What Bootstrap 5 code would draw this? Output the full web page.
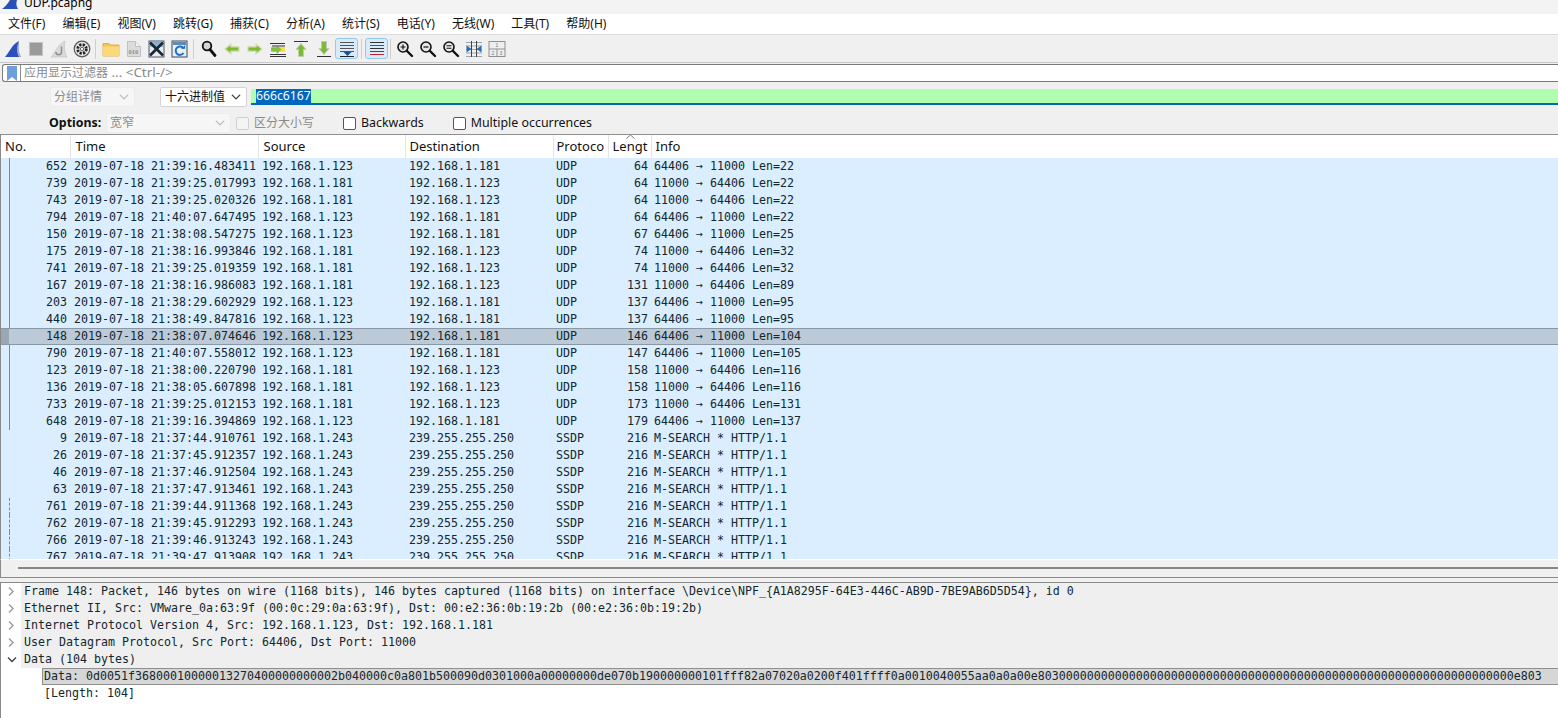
<!DOCTYPE html>
<html lang="zh">
<head>
<meta charset="utf-8">
<title>UDP.pcapng</title>
<link href="https://cdn.jsdelivr.net/npm/bootstrap@5.3.0/dist/css/bootstrap.min.css" rel="stylesheet">
<style>
html,body{height:718px;overflow:hidden}
body{background:#f0f0f0;color:#000;font-family:"Noto Sans","Noto Sans CJK SC",sans-serif;font-size:12px;line-height:1}
.ws-title{height:14px;background:#f3f3f3;overflow:hidden;padding-left:2px;gap:6px}
.ws-title svg{flex:none}
.ws-title span{margin-top:-5px;font-size:12px;line-height:15px}
.ws-menu{height:20px;background:#fff;padding-left:8px;gap:17.1px;font-size:12px;color:#111}
.ws-menu span{white-space:nowrap}
.ws-tools{height:28px;background:#f0f0f0;border-top:1px solid #dcdcdc;padding-left:1px}
.tbtn{width:23px;height:21px;padding:0;border:1px solid transparent;border-radius:3px;flex:none;line-height:0;background:transparent}
.tbtn.on{background:#d9ebfa;border-color:#92c8f2}
.tbtn svg{display:block;margin:auto}
.tsep{width:1px;height:20px;background:#cfcfcf;margin:0 3px 0 2px;flex:none}
.tsep.s2{margin:0 3px 0 3px}
.tsep.s3{margin:0 2px 0 2px}
.ws-filter{height:22px;background:#f0f0f0;padding:1px 0 2px 2px;border-top:1px solid #c8c8c8}
.ws-fbox{height:18px;width:100%;background:#fff;border:1px solid #7a7a7a;border-right:0;border-radius:3px 0 0 3px;overflow:hidden}
.ws-fmark{width:18px;height:100%;border-right:1px solid #8e8e8e;flex:none}
.ws-fph{padding-left:3px;color:#8a8a8a;font-size:12px;white-space:nowrap}
.ws-fph span{font-size:13.4px}
.ws-find{height:26px;padding-left:50px}
.ws-sel.form-select{font-size:12px;line-height:16px;height:20px;min-height:0;padding:0 0 0 3px;border-radius:2px;border:1px solid #d4d4d4;background-color:#fff;background-position:right 5px center;background-size:10px 10px;color:#111;font-family:inherit}
.ws-sel.form-select:disabled{background-color:#f6f6f6;border-color:#ececec;color:#8c8c8c;background-image:url("data:image/svg+xml,%3csvg xmlns='http://www.w3.org/2000/svg' viewBox='0 0 16 16'%3e%3cpath fill='none' stroke='%23bbbbbb' stroke-linecap='round' stroke-linejoin='round' stroke-width='2' d='m2 5 6 6 6-6'/%3e%3c/svg%3e")}
.ws-s1{width:85px;margin-right:25px}
.ws-s2{width:87px;margin-right:4px}
.ws-s2.form-select{padding-left:4px}
.ws-s3{width:125px}
.ws-hex{flex:1;height:16px;background:#afffaf;border-bottom:2px solid #0067c0;padding-left:5px;line-height:14px;font-size:12.2px;overflow:hidden}
.ws-hex span{display:inline-block;background:#0067c0;color:#fff;height:14px;line-height:14px}
.ws-opts{height:24px;padding-left:49px;padding-top:2px;font-size:12.4px;color:#111}
.ws-opts b{font-weight:700;width:57px;flex:none}
.ws-chk{display:flex;align-items:center;gap:5px;white-space:nowrap}
.ws-chk .form-check-input{width:13px;height:13px;margin:0;border:1px solid #555;border-radius:2px;background-color:#fff;flex:none}
.ws-chk .form-check-input:disabled{opacity:1;border-color:#d0d0d0;background-color:#f4f4f4}
.ws-chk.off{color:#8a8a8a;font-size:12px;margin-left:5px}
.ws-chk.on29{margin-left:29px}
.ws-list{height:425px;border-top:1px solid #8f8f8f;border-left:1px solid #8a8a8a;overflow:hidden}
.ws-tbl{table-layout:fixed;width:1557px;border-collapse:collapse;font-family:"DejaVu Sans Mono",monospace;font-size:11.63px;color:#12272e}
.ws-tbl th{height:23px;background:#fff;font-family:"Noto Sans",sans-serif;font-weight:400;font-size:13px;color:#111;padding:0 0 0 5px;border-right:1px solid #e4e4e4;white-space:nowrap;overflow:hidden;position:relative}
.ws-tbl th.hn{padding-left:4px}
.ws-tbl th.hd{padding-left:4px}
.ws-tbl th:last-child{border-right:0;padding-left:4px}
.ws-tbl th.hp{padding-left:3px}
.ws-tbl th.hl{padding-left:4px}
.ws-tbl td{height:17px;padding:0 0 0 4px;background:#daeeff;white-space:nowrap;overflow:hidden;line-height:17px;border:0}
.ws-tbl td.rt{text-align:right;padding:0 3px 0 0}
.ws-tbl td.lf{padding-left:3px}
.ws-tbl tr.sel td{background:#bccad8;box-shadow:inset 0 1px 0 #8a98a6,inset 0 -1px 0 #8a98a6}
.ws-tbl td.fno{position:relative}
.ws-tbl td.fno::before{content:"";position:absolute;left:8px;top:0;bottom:0}
.ws-tbl tr.ln td.fno::before{border-left:1px solid #7d8a94}
.ws-tbl tr.dsh td.fno::before{border-left:1px dashed #7d8a94}
.ws-tbl tr.sel td.fno::after{content:"";position:absolute;left:0;top:1px;bottom:1px;width:8px;background:#9aa8b5}
.ws-sort{position:absolute;left:17px;top:-1px;display:block}
.ws-hbar{height:18px;border-left:1px solid #8a8a8a;border-top:1px solid #fff;background:#f0f0f0;padding:7px 0 0 17px}
.ws-hbar i{display:block;height:2px;background:#868686}
.ws-split{height:6px;border-top:1px solid #8a8a8a;border-bottom:1px solid #8a8a8a;background:#f0f0f0}
.ws-tree{background:#fff;height:136px;border-left:1px solid #8a8a8a;font-family:"DejaVu Sans Mono",monospace;font-size:11.63px;color:#12272e;overflow:hidden}
.ws-node{height:17px;line-height:17px;white-space:nowrap;display:flex}
.ws-tw{width:20px;flex:none;background:#fff}
.ws-tw svg{display:block;margin:4px 0 0 6px}
.ws-tw svg.open{margin-left:2px;margin-top:5px}
.ws-lab{flex:1;background:#efefef;padding-left:3px;overflow:hidden}
.ws-kid{padding-left:41px}
.ws-kid div{background:#d6d6d6;border:1px solid #8f8f8f;border-right:0;height:17px;line-height:15px;padding-left:1px;overflow:hidden;white-space:nowrap}
.ws-plain{padding-left:43px;height:17px;line-height:17px;white-space:nowrap}
</style>
</head>
<body>
<div class="ws-title d-flex align-items-start">
  <svg width="16" height="9" viewBox="0 0 16 9"><path d="M0 9C3 7 6 3 8 0h7c-1 3-1 6 1 9z" fill="#2a50b8"/></svg>
  <span>UDP.pcapng</span>
</div>
<div class="ws-menu d-flex align-items-center">
  <span>文件(F)</span><span>编辑(E)</span><span>视图(V)</span><span>跳转(G)</span><span>捕获(C)</span><span>分析(A)</span><span>统计(S)</span><span>电话(Y)</span><span>无线(W)</span><span>工具(T)</span><span>帮助(H)</span>
</div>
<div class="ws-tools d-flex align-items-center">
  <button class="btn tbtn" title="开始"><svg width="18" height="18" viewBox="0 0 18 18"><path d="M1 17C5 13 8 4 15 1c-1 5-1 11 2 16z" fill="#2b50bb"/><path d="M15 1c-1 5-1 11 2 16h-2c-3-5-2-12 0-16z" fill="#a9b6cf"/></svg></button>
  <button class="btn tbtn" title="停止"><svg width="16" height="16" viewBox="0 0 16 16"><rect x="1.500" y="1.500" width="13" height="13" fill="#9a9a9a" stroke="#c4c4c4"/></svg></button>
  <button class="btn tbtn" title="重新开始"><svg width="18" height="18" viewBox="0 0 18 18"><path d="M1 17C5 13 8 4 15 1c-1 5-1 11 2 16z" fill="#dadada" stroke="#bdbdbd" stroke-width=".6"/><path d="M11.500 6.500v5.500a2.800 2.800 0 0 1-5.600 0" fill="none" stroke="#8f8f8f" stroke-width="1.500"/></svg></button>
  <button class="btn tbtn" title="选项"><svg width="18" height="18" viewBox="0 0 18 18"><circle cx="9" cy="9" r="7.800" fill="#e9e9e9" stroke="#555" stroke-width="1.200"/><circle cx="9" cy="9" r="4.300" fill="none" stroke="#222" stroke-width="2.800" stroke-dasharray="2.200 1.200"/><circle cx="9" cy="9" r="1.700" fill="#f2f2f2" stroke="#333" stroke-width=".7"/></svg></button>
  <div class="tsep"></div>
  <button class="btn tbtn" title="打开"><svg width="18" height="16" viewBox="0 0 18 16"><path d="M1 2.500h6l1.500 1.500H17v11H1z" fill="#f5c451" stroke="#dca433" stroke-width=".8"/><path d="M1 5.500h16V15H1z" fill="#fad97b"/></svg></button>
  <button class="btn tbtn" title="保存"><svg width="16" height="18" viewBox="0 0 16 18"><path d="M1.500 1.500h8l5 5v10h-13z" fill="#dcdcdc" stroke="#c0c0c0"/><path d="M9.500 1.500v5h5" fill="#f2f2f2" stroke="#c0c0c0"/><text x="2.600" y="14" font-family="Liberation Mono,monospace" font-size="5.400" font-weight="700" fill="#8a8a8a">010</text></svg></button>
  <button class="btn tbtn" title="关闭"><svg width="17" height="18" viewBox="0 0 17 18"><rect x="1" y="1" width="15" height="16" fill="#e6edf2" stroke="#4a5968"/><rect x="2" y="2" width="13" height="5" fill="#8fb0cd"/><path d="M2 2.500l13 13M15 2.500L2 15.500" stroke="#1c2630" stroke-width="2.600"/></svg></button>
  <button class="btn tbtn" title="重新载入"><svg width="17" height="18" viewBox="0 0 17 18"><rect x="1" y="1" width="15" height="16" fill="#e9eff5" stroke="#39495a"/><rect x="2" y="2" width="13" height="3" fill="#5f88b3"/><path d="M12.500 8.500a4.200 4.200 0 1 0 0 4.400" fill="none" stroke="#1e6fc9" stroke-width="2"/><path d="M10 8.800h4.200V5z" fill="#1e6fc9"/></svg></button>
  <div class="tsep"></div>
  <button class="btn tbtn" title="查找"><svg width="18" height="18" viewBox="0 0 18 18"><circle cx="7" cy="6" r="4.300" fill="#d5d5d5" stroke="#111" stroke-width="1.800"/><path d="M10 9.500l5 6" stroke="#111" stroke-width="2.800" stroke-linecap="round"/></svg></button>
  <button class="btn tbtn" title="前一个"><svg width="16" height="12" viewBox="0 0 16 12"><path d="M1 6l6-5v2.800h8v4.400H7V11z" fill="#7dbb33" stroke="#d3dfb0" stroke-width="1.200"/></svg></button>
  <button class="btn tbtn" title="后一个"><svg width="16" height="12" viewBox="0 0 16 12"><path d="M15 6L9 1v2.800H1v4.400h8V11z" fill="#7dbb33" stroke="#d3dfb0" stroke-width="1.200"/></svg></button>
  <button class="btn tbtn" title="转至"><svg width="18" height="18" viewBox="0 0 18 18"><path d="M1 3.500h15M3 6h13M1 14.500h16M1 16.500h16" stroke="#333" stroke-width="1"/><rect x="11" y="7" width="5" height="5" fill="#f4e04a"/><path d="M12 9.500L8 5.500v2.200H2.500v3.600H8v2.200z" fill="#82c341" stroke="#6b8f3e" stroke-width=".5"/></svg></button>
  <button class="btn tbtn" title="首个"><svg width="16" height="18" viewBox="0 0 16 18"><path d="M1 1.500h14" stroke="#333" stroke-width="1"/><path d="M8 3.500l5 6h-2.500v7h-5v-7H3z" fill="#7dbb33" stroke="#c3c9b6"/></svg></button>
  <button class="btn tbtn" title="最后"><svg width="16" height="18" viewBox="0 0 16 18"><path d="M1 16.500h14" stroke="#333" stroke-width="1"/><path d="M8 14.500l5-6h-2.500v-7h-5v7H3z" fill="#7dbb33" stroke="#c3c9b6"/></svg></button>
  <button class="btn tbtn on" title="自动滚屏"><svg width="18" height="18" viewBox="0 0 18 18"><path d="M2 2.500h14M2 5.500h14M2 8.500h14M2 11.500h14" stroke="#555" stroke-width="1"/><path d="M2 16.500h14" stroke="#222" stroke-width="1"/><path d="M5.500 12h8l-4 4z" fill="#1d4f91"/></svg></button>
  <div class="tsep s2"></div>
  <button class="btn tbtn on" title="着色"><svg width="18" height="16" viewBox="0 0 18 16"><path d="M2 1.500h14" stroke="#333"/><path d="M2 4.500h14" stroke="#c22"/><path d="M2 7.500h14" stroke="#333"/><path d="M2 10.500h14" stroke="#1d4fb0"/><path d="M2 13.500h14" stroke="#c22"/></svg></button>
  <div class="tsep s3"></div>
  <button class="btn tbtn" title="放大"><svg width="18" height="18" viewBox="0 0 18 18"><circle cx="7" cy="7" r="5" fill="#e8e8e8" stroke="#111" stroke-width="1.600"/><path d="M4.500 7h5M7 4.500v5" stroke="#111" stroke-width="1.200"/><path d="M11 11l5 5" stroke="#111" stroke-width="2.400" stroke-linecap="round"/></svg></button>
  <button class="btn tbtn" title="缩小"><svg width="18" height="18" viewBox="0 0 18 18"><circle cx="7" cy="7" r="5" fill="#e8e8e8" stroke="#111" stroke-width="1.600"/><path d="M4.500 7h5" stroke="#111" stroke-width="1.200"/><path d="M11 11l5 5" stroke="#111" stroke-width="2.400" stroke-linecap="round"/></svg></button>
  <button class="btn tbtn" title="普通大小"><svg width="18" height="18" viewBox="0 0 18 18"><circle cx="7" cy="7" r="5" fill="#e8e8e8" stroke="#111" stroke-width="1.600"/><path d="M4.500 5.700h5M4.500 8.300h5" stroke="#111" stroke-width="1.100"/><path d="M11 11l5 5" stroke="#111" stroke-width="2.400" stroke-linecap="round"/></svg></button>
  <button class="btn tbtn" title="调整列"><svg width="18" height="18" viewBox="0 0 18 18"><path d="M1 2.500h16M1 6h16M1 9.500h16M1 13h16M1 16.500h16" stroke="#9aa5ae" stroke-width="1"/><path d="M6.500 1v16M11.500 1v16" stroke="#444" stroke-width="1"/><path d="M1.500 5.500l5 3.500-5 3.500zM16.500 5.500l-5 3.500 5 3.500z" fill="#2b6cb8"/></svg></button>
  <button class="btn tbtn" title="布局"><svg width="18" height="18" viewBox="0 0 18 18"><rect x="1" y="1.500" width="16" height="15" fill="#eee" stroke="#8f8f8f"/><path d="M1 9h16M9 9v7.500" stroke="#8f8f8f"/><text x="7.400" y="7" font-family="Liberation Sans,sans-serif" font-size="5" fill="#777">1</text><text x="3.400" y="15" font-family="Liberation Sans,sans-serif" font-size="5" fill="#777">2</text><text x="11.500" y="15" font-family="Liberation Sans,sans-serif" font-size="5" fill="#777">3</text></svg></button>
</div>
<div class="ws-filter">
  <div class="ws-fbox d-flex align-items-center">
    <div class="ws-fmark d-flex align-items-center justify-content-center"><svg width="10" height="15" viewBox="0 0 10 15"><path d="M0 0h10v15L5 11 0 15z" fill="#6f9fd8"/></svg></div>
    <span class="ws-fph">应用显示过滤器<span> ... &lt;Ctrl-/&gt;</span></span>
  </div>
</div>
<div class="ws-find d-flex align-items-center">
  <select class="form-select ws-sel ws-s1" disabled><option>分组详情</option></select>
  <select class="form-select ws-sel ws-s2"><option>十六进制值</option></select>
  <div class="ws-hex"><span>666c6167</span></div>
</div>
<div class="ws-opts d-flex align-items-center">
  <b>Options:</b>
  <select class="form-select ws-sel ws-s3" disabled><option>宽窄</option></select>
  <label class="ws-chk off"><input class="form-check-input" type="checkbox" disabled>区分大小写</label>
  <label class="ws-chk on29"><input class="form-check-input" type="checkbox">Backwards</label>
  <label class="ws-chk on29"><input class="form-check-input" type="checkbox">Multiple occurrences</label>
</div>
<div class="ws-list">
<table class="ws-tbl">
<colgroup><col style="width:69px"><col style="width:188px"><col style="width:147px"><col style="width:148px"><col style="width:55px"><col style="width:43px"><col></colgroup>
<thead><tr><th class="hn">No.</th><th>Time</th><th>Source</th><th class="hd">Destination</th><th class="hp">Protoco</th><th class="hl"><svg class="ws-sort" width="9" height="5" viewBox="0 0 9 5"><path d="M.5 4.500l4-3.500 4 3.500" fill="none" stroke="#777"/></svg>Lengt</th><th>Info</th></tr></thead>
<tbody>
<tr class="ln"><td class="rt fno">652</td><td>2019-07-18 21:39:16.483411</td><td>192.168.1.123</td><td>192.168.1.181</td><td class="lf">UDP</td><td class="rt">64</td><td class="lf">64406 → 11000 Len=22</td></tr>
<tr class="ln"><td class="rt fno">739</td><td>2019-07-18 21:39:25.017993</td><td>192.168.1.181</td><td>192.168.1.123</td><td class="lf">UDP</td><td class="rt">64</td><td class="lf">11000 → 64406 Len=22</td></tr>
<tr class="ln"><td class="rt fno">743</td><td>2019-07-18 21:39:25.020326</td><td>192.168.1.181</td><td>192.168.1.123</td><td class="lf">UDP</td><td class="rt">64</td><td class="lf">11000 → 64406 Len=22</td></tr>
<tr class="ln"><td class="rt fno">794</td><td>2019-07-18 21:40:07.647495</td><td>192.168.1.123</td><td>192.168.1.181</td><td class="lf">UDP</td><td class="rt">64</td><td class="lf">64406 → 11000 Len=22</td></tr>
<tr class="ln"><td class="rt fno">150</td><td>2019-07-18 21:38:08.547275</td><td>192.168.1.123</td><td>192.168.1.181</td><td class="lf">UDP</td><td class="rt">67</td><td class="lf">64406 → 11000 Len=25</td></tr>
<tr class="ln"><td class="rt fno">175</td><td>2019-07-18 21:38:16.993846</td><td>192.168.1.181</td><td>192.168.1.123</td><td class="lf">UDP</td><td class="rt">74</td><td class="lf">11000 → 64406 Len=32</td></tr>
<tr class="ln"><td class="rt fno">741</td><td>2019-07-18 21:39:25.019359</td><td>192.168.1.181</td><td>192.168.1.123</td><td class="lf">UDP</td><td class="rt">74</td><td class="lf">11000 → 64406 Len=32</td></tr>
<tr class="ln"><td class="rt fno">167</td><td>2019-07-18 21:38:16.986083</td><td>192.168.1.181</td><td>192.168.1.123</td><td class="lf">UDP</td><td class="rt">131</td><td class="lf">11000 → 64406 Len=89</td></tr>
<tr class="ln"><td class="rt fno">203</td><td>2019-07-18 21:38:29.602929</td><td>192.168.1.123</td><td>192.168.1.181</td><td class="lf">UDP</td><td class="rt">137</td><td class="lf">64406 → 11000 Len=95</td></tr>
<tr class="ln"><td class="rt fno">440</td><td>2019-07-18 21:38:49.847816</td><td>192.168.1.123</td><td>192.168.1.181</td><td class="lf">UDP</td><td class="rt">137</td><td class="lf">64406 → 11000 Len=95</td></tr>
<tr class="sel"><td class="rt fno">148</td><td>2019-07-18 21:38:07.074646</td><td>192.168.1.123</td><td>192.168.1.181</td><td class="lf">UDP</td><td class="rt">146</td><td class="lf">64406 → 11000 Len=104</td></tr>
<tr class="ln"><td class="rt fno">790</td><td>2019-07-18 21:40:07.558012</td><td>192.168.1.123</td><td>192.168.1.181</td><td class="lf">UDP</td><td class="rt">147</td><td class="lf">64406 → 11000 Len=105</td></tr>
<tr class="ln"><td class="rt fno">123</td><td>2019-07-18 21:38:00.220790</td><td>192.168.1.181</td><td>192.168.1.123</td><td class="lf">UDP</td><td class="rt">158</td><td class="lf">11000 → 64406 Len=116</td></tr>
<tr class="ln"><td class="rt fno">136</td><td>2019-07-18 21:38:05.607898</td><td>192.168.1.181</td><td>192.168.1.123</td><td class="lf">UDP</td><td class="rt">158</td><td class="lf">11000 → 64406 Len=116</td></tr>
<tr class="ln"><td class="rt fno">733</td><td>2019-07-18 21:39:25.012153</td><td>192.168.1.181</td><td>192.168.1.123</td><td class="lf">UDP</td><td class="rt">173</td><td class="lf">11000 → 64406 Len=131</td></tr>
<tr class="ln"><td class="rt fno">648</td><td>2019-07-18 21:39:16.394869</td><td>192.168.1.123</td><td>192.168.1.181</td><td class="lf">UDP</td><td class="rt">179</td><td class="lf">64406 → 11000 Len=137</td></tr>
<tr><td class="rt fno">9</td><td>2019-07-18 21:37:44.910761</td><td>192.168.1.243</td><td>239.255.255.250</td><td class="lf">SSDP</td><td class="rt">216</td><td class="lf">M-SEARCH * HTTP/1.1</td></tr>
<tr><td class="rt fno">26</td><td>2019-07-18 21:37:45.912357</td><td>192.168.1.243</td><td>239.255.255.250</td><td class="lf">SSDP</td><td class="rt">216</td><td class="lf">M-SEARCH * HTTP/1.1</td></tr>
<tr><td class="rt fno">46</td><td>2019-07-18 21:37:46.912504</td><td>192.168.1.243</td><td>239.255.255.250</td><td class="lf">SSDP</td><td class="rt">216</td><td class="lf">M-SEARCH * HTTP/1.1</td></tr>
<tr><td class="rt fno">63</td><td>2019-07-18 21:37:47.913461</td><td>192.168.1.243</td><td>239.255.255.250</td><td class="lf">SSDP</td><td class="rt">216</td><td class="lf">M-SEARCH * HTTP/1.1</td></tr>
<tr class="dsh"><td class="rt fno">761</td><td>2019-07-18 21:39:44.911368</td><td>192.168.1.243</td><td>239.255.255.250</td><td class="lf">SSDP</td><td class="rt">216</td><td class="lf">M-SEARCH * HTTP/1.1</td></tr>
<tr class="dsh"><td class="rt fno">762</td><td>2019-07-18 21:39:45.912293</td><td>192.168.1.243</td><td>239.255.255.250</td><td class="lf">SSDP</td><td class="rt">216</td><td class="lf">M-SEARCH * HTTP/1.1</td></tr>
<tr class="dsh"><td class="rt fno">766</td><td>2019-07-18 21:39:46.913243</td><td>192.168.1.243</td><td>239.255.255.250</td><td class="lf">SSDP</td><td class="rt">216</td><td class="lf">M-SEARCH * HTTP/1.1</td></tr>
<tr class="dsh"><td class="rt fno">767</td><td>2019-07-18 21:39:47.913908</td><td>192.168.1.243</td><td>239.255.255.250</td><td class="lf">SSDP</td><td class="rt">216</td><td class="lf">M-SEARCH * HTTP/1.1</td></tr>
</tbody>
</table>
</div>
<div class="ws-hbar"><i></i></div>
<div class="ws-split"></div>
<div class="ws-tree">
  <div class="ws-node"><div class="ws-tw"><svg width="8" height="9" viewBox="0 0 8 9"><path d="M2 .5l4 4-4 4" fill="none" stroke="#9a9a9a" stroke-width="1.400"/></svg></div><div class="ws-lab">Frame 148: Packet, 146 bytes on wire (1168 bits), 146 bytes captured (1168 bits) on interface \Device\NPF_{A1A8295F-64E3-446C-AB9D-7BE9AB6D5D54}, id 0</div></div>
  <div class="ws-node"><div class="ws-tw"><svg width="8" height="9" viewBox="0 0 8 9"><path d="M2 .5l4 4-4 4" fill="none" stroke="#9a9a9a" stroke-width="1.400"/></svg></div><div class="ws-lab">Ethernet II, Src: VMware_0a:63:9f (00:0c:29:0a:63:9f), Dst: 00:e2:36:0b:19:2b (00:e2:36:0b:19:2b)</div></div>
  <div class="ws-node"><div class="ws-tw"><svg width="8" height="9" viewBox="0 0 8 9"><path d="M2 .5l4 4-4 4" fill="none" stroke="#9a9a9a" stroke-width="1.400"/></svg></div><div class="ws-lab">Internet Protocol Version 4, Src: 192.168.1.123, Dst: 192.168.1.181</div></div>
  <div class="ws-node"><div class="ws-tw"><svg width="8" height="9" viewBox="0 0 8 9"><path d="M2 .5l4 4-4 4" fill="none" stroke="#9a9a9a" stroke-width="1.400"/></svg></div><div class="ws-lab">User Datagram Protocol, Src Port: 64406, Dst Port: 11000</div></div>
  <div class="ws-node"><div class="ws-tw"><svg class="open" width="10" height="8" viewBox="0 0 10 8" style="margin-left:6px"><path d="M1 1.500l4 4 4-4" fill="none" stroke="#444" stroke-width="1.400"/></svg></div><div class="ws-lab">Data (104 bytes)</div></div>
  <div class="ws-kid"><div>Data: 0d0051f36800010000013270400000000002b040000c0a801b500090d0301000a00000000de070b190000000101fff82a07020a0200f401ffff0a0010040055aa0a0a00e80300000000000000000000000000000000000000000000000000000000000000000e803</div></div>
  <div class="ws-plain">[Length: 104]</div>
</div>
</body>
</html>
